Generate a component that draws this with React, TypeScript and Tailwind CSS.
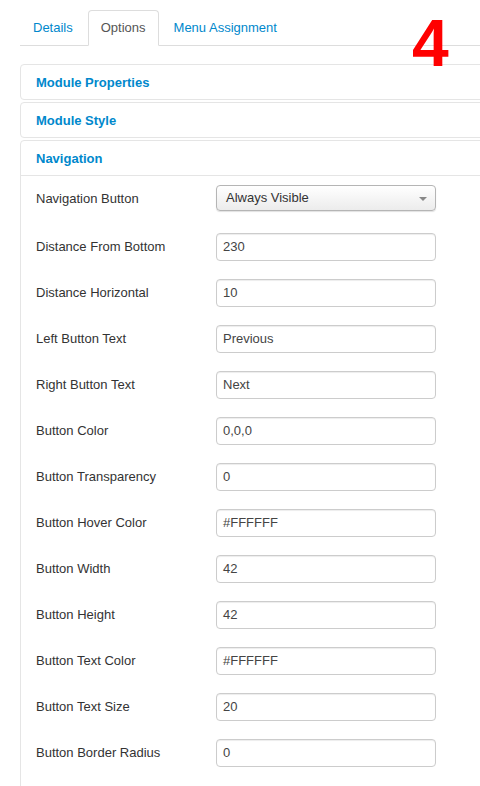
import React from 'react';

const fields: { label: string; value: string }[] = [
  { label: 'Distance From Bottom', value: '230' },
  { label: 'Distance Horizontal', value: '10' },
  { label: 'Left Button Text', value: 'Previous' },
  { label: 'Right Button Text', value: 'Next' },
  { label: 'Button Color', value: '0,0,0' },
  { label: 'Button Transparency', value: '0' },
  { label: 'Button Hover Color', value: '#FFFFFF' },
  { label: 'Button Width', value: '42' },
  { label: 'Button Height', value: '42' },
  { label: 'Button Text Color', value: '#FFFFFF' },
  { label: 'Button Text Size', value: '20' },
  { label: 'Button Border Radius', value: '0' },
];

const App: React.FC = () => {
  return (
    <div className="relative w-[480px] h-[786px] overflow-hidden bg-white font-['Liberation_Sans',Arial,sans-serif] text-[13px] text-[#333] antialiased">
      <div className="w-[520px] pl-5 pt-[10px]">
        {/* Tabs */}
        <ul className="flex border-b border-[#ddd] leading-[18px]">
          <li className="-mb-px mr-[2px] px-3 py-2 border border-transparent text-[#0088cc]">Details</li>
          <li className="-mb-px mr-[2px] px-3 py-2 border border-[#ddd] border-b-white rounded-t-[4px] bg-white text-[#555]">
            Options
          </li>
          <li className="-mb-px mr-[2px] px-3 py-2 border border-transparent text-[#0088cc]">Menu Assignment</li>
        </ul>

        {/* Accordion */}
        <div className="mt-[18px]">
          <div className="mb-[2px] border border-[#e5e5e5] rounded-[4px]">
            <div className="px-[15px] pt-[9px] pb-[7px] leading-[18px] font-bold text-[#0088cc]">Module Properties</div>
          </div>
          <div className="mb-[2px] border border-[#e5e5e5] rounded-[4px]">
            <div className="px-[15px] pt-[9px] pb-[7px] leading-[18px] font-bold text-[#0088cc]">Module Style</div>
          </div>
          <div className="border border-[#e5e5e5] rounded-[4px]">
            <div className="px-[15px] pt-[9px] pb-[7px] leading-[18px] font-bold text-[#0088cc]">Navigation</div>
            <div className="border-t border-[#e5e5e5] px-[15px] pt-[9px] pb-6">
              <div className="flex items-center h-[26px] mb-[22px]">
                <label className="w-[180px] pt-px">Navigation Button</label>
                <div className="relative flex items-center w-[220px] h-[26px] pl-[9px] border border-[#b5b5b5] rounded-[4px] bg-gradient-to-b from-white to-[#ececec] shadow-[0_1px_1px_rgba(0,0,0,0.12)] text-[#333]">
                  Always Visible
                  <span className="absolute right-[8px] top-[11px] w-0 h-0 border-l-[4px] border-r-[4px] border-t-[4px] border-l-transparent border-r-transparent border-t-[#888]" />
                </div>
              </div>
              {fields.map((f) => (
                <div key={f.label} className="flex items-center h-[28px] mb-[18px]">
                  <label className="w-[180px]">{f.label}</label>
                  <div className="flex items-center w-[220px] h-[28px] px-[6px] border border-[#ccc] rounded-[4px] bg-white shadow-[inset_0_1px_1px_rgba(0,0,0,0.075)] text-[#444]">
                    {f.value}
                  </div>
                </div>
              ))}
            </div>
          </div>
        </div>
      </div>

      {/* Step marker */}
      <div className="absolute left-[412px] top-[10px] text-[66px] leading-none font-bold text-[#ff0000]">4</div>
    </div>
  );
};

export default App;
